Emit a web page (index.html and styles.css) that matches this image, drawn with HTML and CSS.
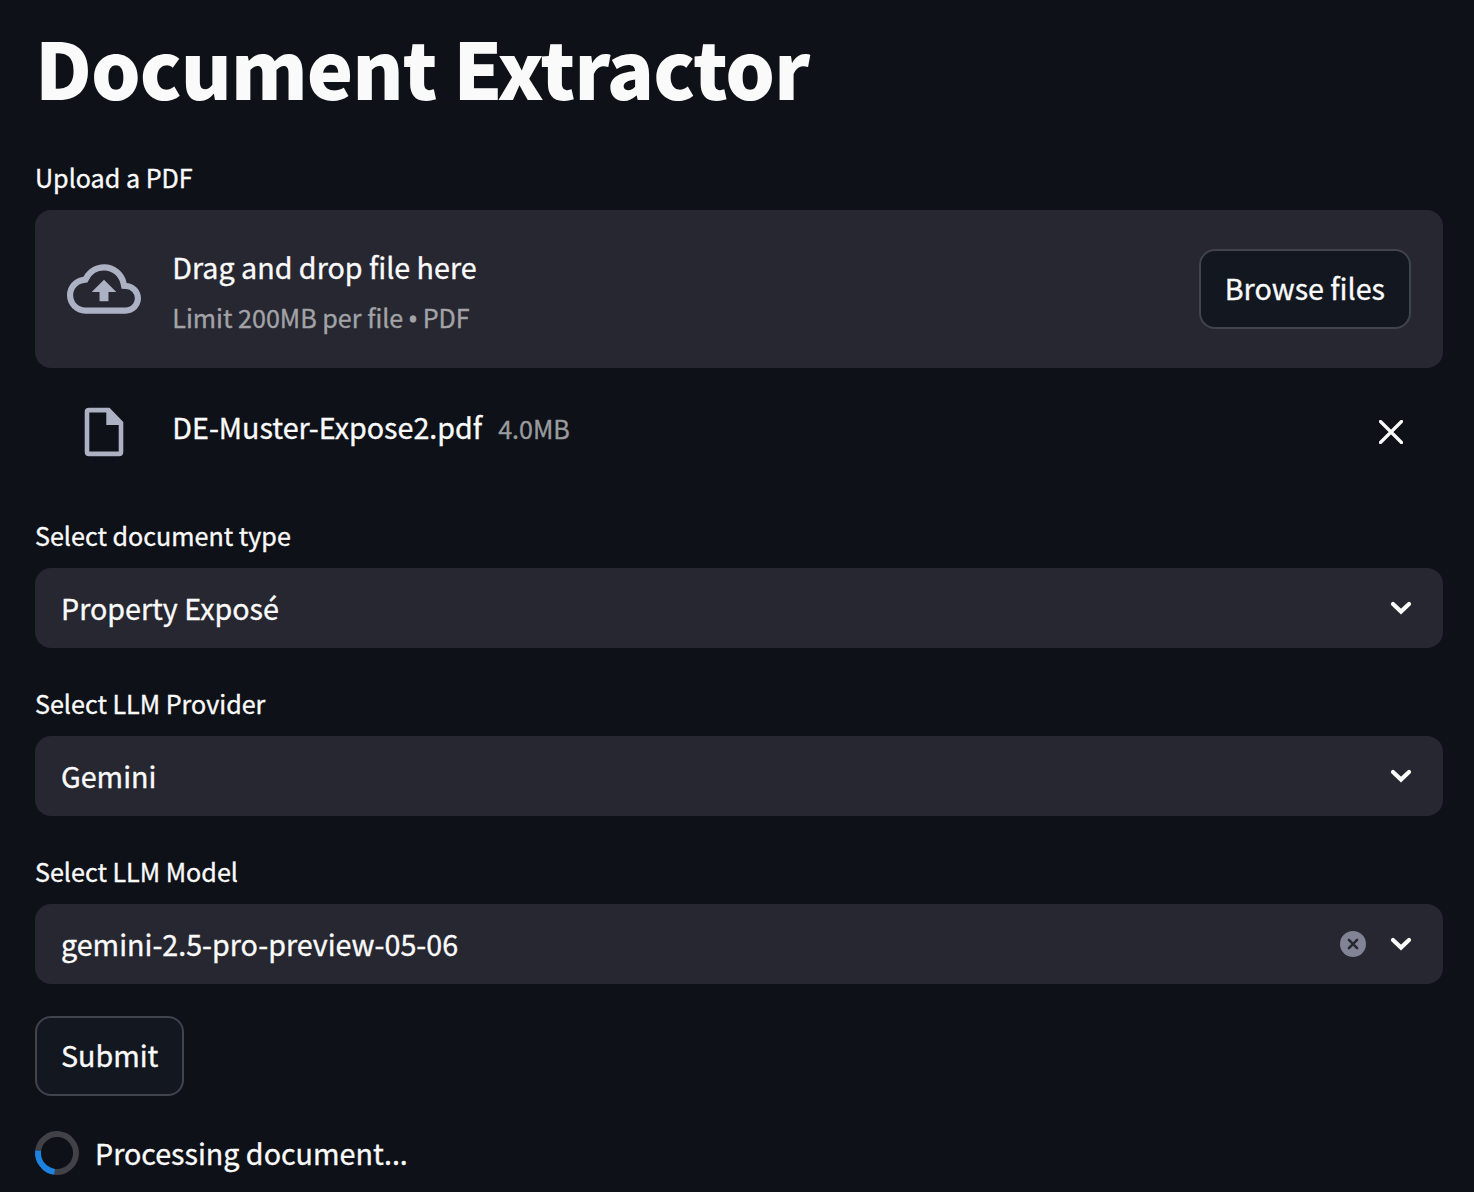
FILE: index.html
```html
<!DOCTYPE html>
<html lang="en">
<head>
<meta charset="utf-8">
<title>Document Extractor</title>
<link rel="stylesheet" href="styles.css">
</head>
<body>
<main class="app">
  <h1 class="title">Document Extractor</h1>

  <section class="field upload">
    <span class="label">Upload a PDF</span>
    <div class="dropzone">
      <svg class="cloud" viewBox="0 0 24 24"><path d="M19.35 10.04A7.49 7.49 0 0 0 12 4C9.11 4 6.6 5.64 5.35 8.04A5.994 5.994 0 0 0 0 14c0 3.31 2.69 6 6 6h13c2.76 0 5-2.24 5-5 0-2.64-2.05-4.78-4.65-4.96zM19 18H6c-2.21 0-4-1.79-4-4 0-2.05 1.53-3.76 3.56-3.97l1.07-.11.5-.95A5.469 5.469 0 0 1 12 6c2.62 0 4.88 1.86 5.39 4.43l.3 1.5 1.53.11A2.98 2.98 0 0 1 22 15c0 1.65-1.35 3-3 3zM8 13h2.55v3h2.9v-3H16l-4-4z"/></svg>
      <div class="hint">
        <span class="hint-main">Drag and drop file here</span>
        <span class="hint-sub">Limit 200MB per file <span class="bullet">•</span> PDF</span>
      </div>
      <button class="button">Browse files</button>
    </div>
    <div class="file">
      <svg class="file-icon" viewBox="0 0 40 50"><path d="M5 .8H25.500L39.300 15V45Q39.300 49.200 35 49.200H5Q.7 49.200 .7 45V5Q.7 .8 5 .8ZM5.300 5.500V44.500H34.700V18H22.300V5.500Z" fill-rule="evenodd"/></svg>
      <span class="file-name">DE-Muster-Expose2.pdf</span>
      <span class="file-size">4.0MB</span>
      <svg class="remove" viewBox="0 0 24 24"><path d="M1.500 1.500L22.500 22.500M22.500 1.500L1.500 22.500"/></svg>
    </div>
  </section>

  <section class="field">
    <span class="label">Select document type</span>
    <div class="select"><span class="value">Property Exposé</span>
      <svg class="chevron" viewBox="0 0 22 14"><path d="M3 3L11 10.600L19 3"/></svg></div>
  </section>
  <section class="field">
    <span class="label">Select LLM Provider</span>
    <div class="select"><span class="value">Gemini</span>
      <svg class="chevron" viewBox="0 0 22 14"><path d="M3 3L11 10.600L19 3"/></svg></div>
  </section>
  <section class="field">
    <span class="label">Select LLM Model</span>
    <div class="select"><span class="value">gemini-2.5-pro-preview-05-06</span>
      <svg class="clear" viewBox="0 0 26 26"><circle cx="13" cy="13" r="13"/><path d="M8.900 8.900L17.100 17.100M17.100 8.900L8.900 17.100"/></svg>
      <svg class="chevron" viewBox="0 0 22 14"><path d="M3 3L11 10.600L19 3"/></svg></div>
  </section>

  <button class="button submit">Submit</button>
  <div class="status">
    <span class="spinner"></span>
    <span class="status-text">Processing document...</span>
  </div>
</main>
</body>
</html>
```
FILE: styles.css
```css
* { box-sizing: border-box; }
body {
  margin: 0;
  background: #0e1117;
  color: #fafafa;
  font-family: "Noto Sans CJK SC", "Noto Sans", sans-serif;
  font-size: 28.67px;
  line-height: 40px;
  -webkit-text-stroke: 0.35px currentColor;
}
.app { height: 1192px; padding: 14px 31px 0 35px; overflow: hidden; display: flex; flex-direction: column; align-items: stretch; }
.title { margin: 0 0 44px; font-size: 78.2px; line-height: 105px; height: 104px; font-weight: 900; letter-spacing: -1.05px; -webkit-text-stroke: 0; }
.field { display: flex; flex-direction: column; flex-shrink: 0; margin-bottom: 40px; }
.field:last-of-type { margin-bottom: 32px; }
.label { height: 48px; line-height: 31px; font-size: 25.1px; }
.dropzone { height: 158px; padding: 0 32px; display: flex; align-items: center; background: #262730; border-radius: 16px; }
.cloud { width: 74px; height: 74px; margin-right: 31.3px; fill: #acb1c3; }
.hint { flex: 1; padding-top: 6px; display: flex; flex-direction: column; }
.hint-main { line-height: 50px; }
.hint-sub { font-size: 25.1px; line-height: 50px; color: #a3a3a7; }
.bullet { font-family: "Open Sans", sans-serif; margin: 0 -0.6px; -webkit-text-stroke-width: 1.2px; }
.button { height: 80px; padding: 0 24px 2px; border: 2px solid #41444c; border-radius: 16px; background: #131720; color: inherit; font: inherit; }
.file { height: 112px; padding: 16px 40px 0 49px; display: flex; align-items: center; }
.file-icon { width: 40px; height: 50px; margin-right: 48.3px; fill: #acb1c3; }
.file-name { padding-bottom: 11px; }
.file-size { margin-left: 16px; padding-bottom: 8px; font-size: 25.1px; color: #9a9b9e; }
.remove { width: 24px; height: 24px; margin-left: auto; stroke: #fafafa; stroke-width: 3.2; stroke-linecap: round; }
.select { height: 80px; padding: 0 31px 0 26px; display: flex; align-items: center; background: #262730; border-radius: 16px; }
.value { flex: 1; padding-bottom: 1px; }
.chevron { width: 22px; height: 14px; fill: none; stroke: #fafafa; stroke-width: 4.2; stroke-linecap: round; }
.clear { width: 26px; height: 26px; margin-right: 24px; fill: #808495; }
.clear path { stroke: #262730; stroke-width: 2.6; stroke-linecap: round; }
.submit { align-self: flex-start; flex-shrink: 0; }
.status { display: flex; align-items: center; margin-top: 34px; gap: 16px; height: 46px; }
.spinner { width: 44px; height: 44px; border: 6px solid #414247; border-left-color: #1c83e1; border-radius: 50%; transform: rotate(-38deg); }
.status-text { padding-bottom: 1px; }
```
